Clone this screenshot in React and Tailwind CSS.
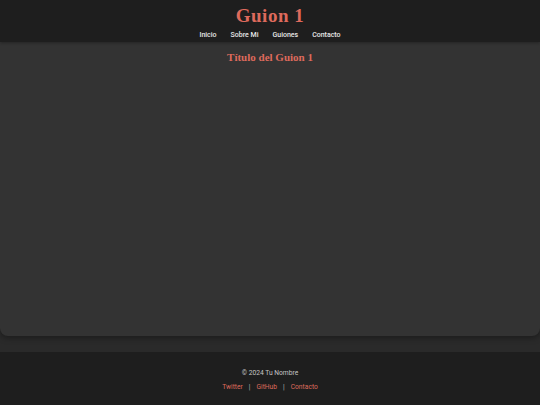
import React from 'react';

const navLinks = ['Inicio', 'Sobre Mi', 'Guiones', 'Contacto'];
const footerLinks = ['Twitter', 'GitHub', 'Contacto'];

const App = () => {
    return (
        <div className="min-h-[405px] flex flex-col bg-[#2a2a2a] font-['Roboto',sans-serif]">
            {/* Header */}
            <header className="h-[42px] bg-[#1e1e1e] flex flex-col items-center pt-[4px] relative z-10 shadow-[0_1px_3px_rgba(0,0,0,0.3)]">
                <h1 className="text-[19px] leading-[24px] font-bold text-[#de6a5c] font-['Liberation_Serif',serif] tracking-[0.5px]">
                    Guion 1
                </h1>
                <nav className="flex gap-[14px] mt-[2px]">
                    {navLinks.map((link) => (
                        <a key={link} href="#" className="text-[7px] leading-[10px] font-medium text-[#e8e8e8]">
                            {link}
                        </a>
                    ))}
                </nav>
            </header>

            {/* Contenido */}
            <main className="h-[294px] bg-[#333333] rounded-b-lg shadow-[0_2px_6px_rgba(0,0,0,0.35)] flex flex-col items-center pt-[8px]">
                <h2 className="text-[11px] leading-[14px] font-bold text-[#de6a5c] font-['Liberation_Serif',serif]">
                    Título del Guion 1
                </h2>
            </main>

            {/* Footer */}
            <footer className="mt-[16px] h-[53px] bg-[#1e1e1e] flex flex-col items-center pt-[16px] text-[6.7px] leading-[10px]">
                <p className="text-[#c4c4c4]">© 2024 Tu Nombre</p>
                <div className="flex items-center gap-[5px] mt-[4px]">
                    {footerLinks.map((link, i) => (
                        <React.Fragment key={link}>
                            {i > 0 && <span className="text-[#bbbbbb] px-[1px]">|</span>}
                            <a href="#" className="text-[#de6a5c]">{link}</a>
                        </React.Fragment>
                    ))}
                </div>
            </footer>
        </div>
    );
};

export default App;
